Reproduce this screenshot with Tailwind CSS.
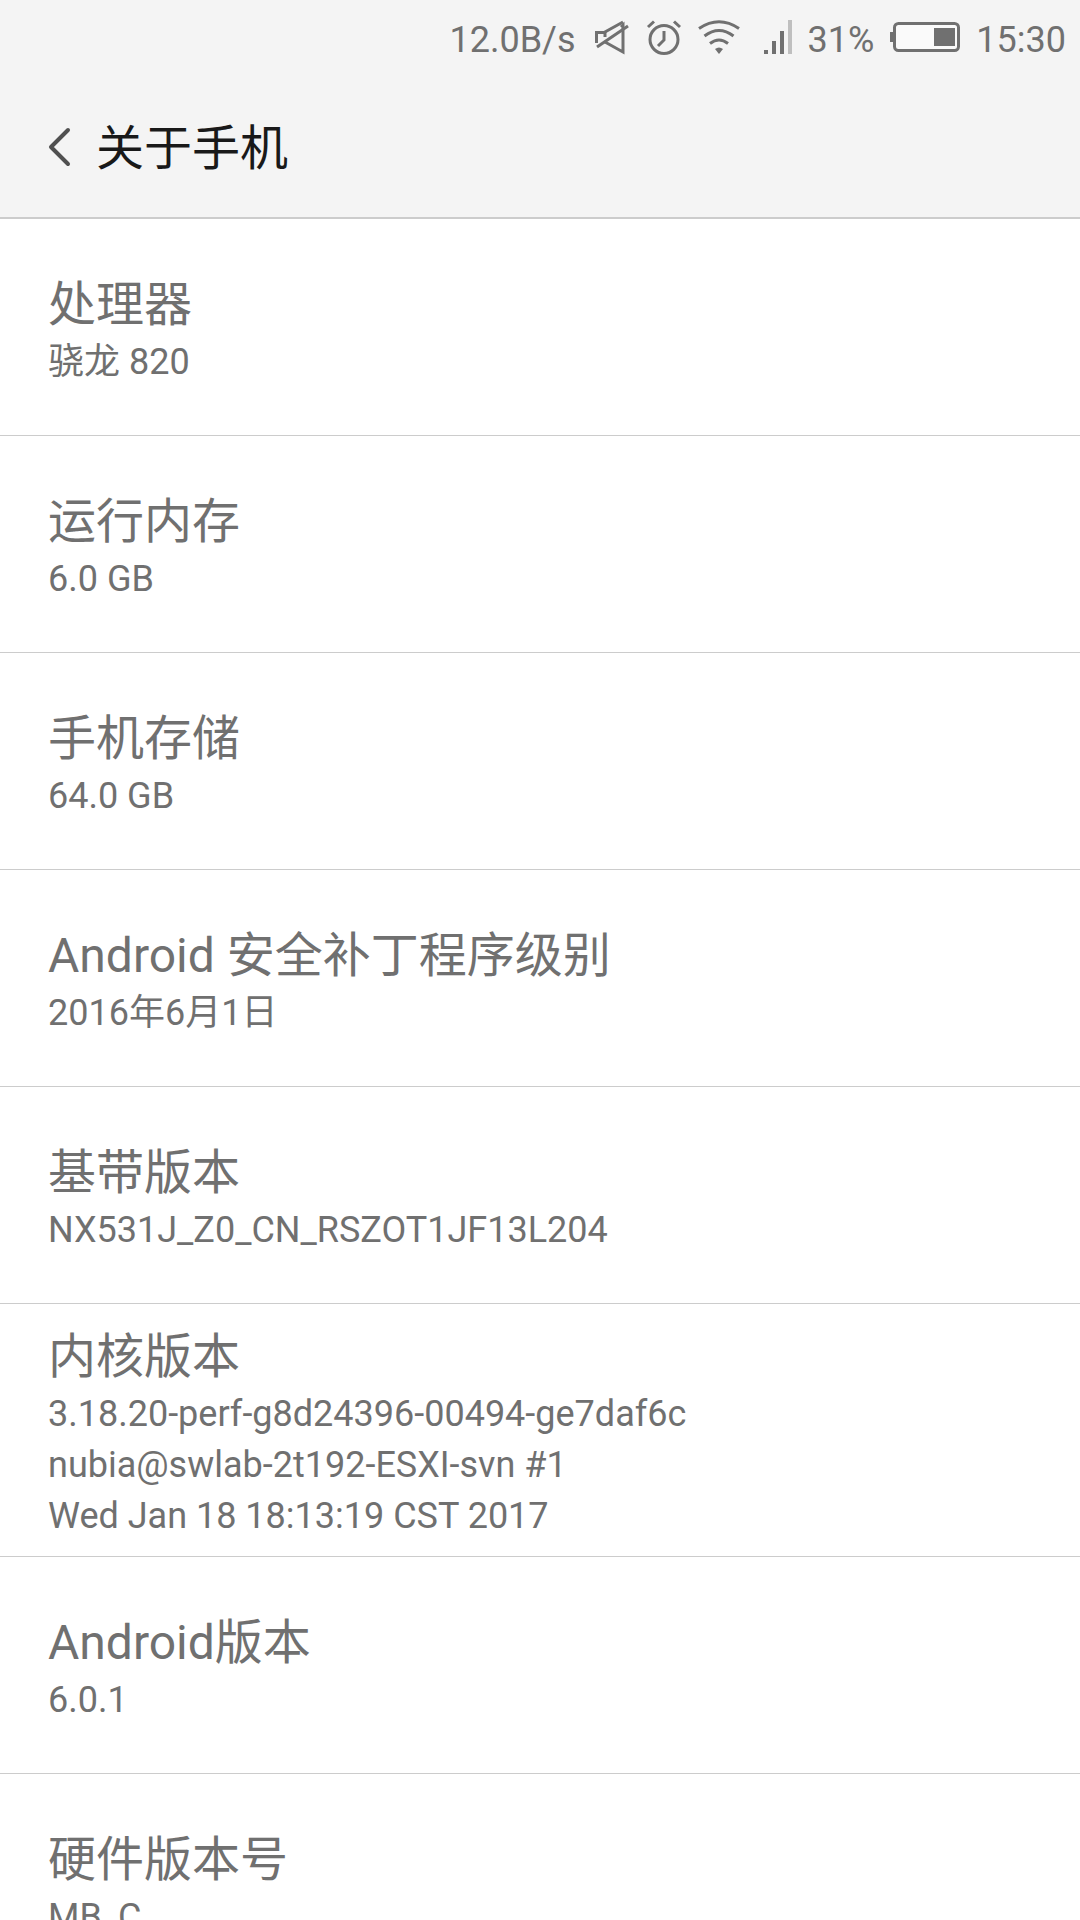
<!DOCTYPE html>
<html lang="zh-CN">
<head>
    <meta charset="UTF-8">
    <meta name="viewport" content="width=device-width, initial-scale=1.0">
    <title>关于手机</title>
    <script src="https://cdn.jsdelivr.net/npm/@tailwindcss/browser@4"></script>
</head>
<body class="h-screen overflow-hidden bg-white text-[#707070] font-[Roboto,'Noto_Sans_CJK_SC',sans-serif]">
    <header class="bg-[#f4f4f4] border-b-2 border-[#cccccc]">
        <!-- status bar -->
        <div class="flex items-center justify-end h-[74px] pr-[14px] text-4xl [&>span]:pt-[6px]">
            <span class="mr-[18px]">12.0B/s</span>
            <svg class="mr-4 w-9 h-9" viewBox="0 0 36 36" fill="none" stroke="currentColor" stroke-width="3">
                <path d="M2.5 24V13.5H10L29 3"/>
                <path d="M11 13V18"/>
                <path d="M27 8L29 6V33L11 23"/>
                <path d="M3 28L34 7"/>
            </svg>
            <svg class="mr-4 w-9 h-9" viewBox="0 0 36 36" fill="none" stroke="currentColor" stroke-width="3">
                <circle cx="18" cy="20.5" r="14"/>
                <path d="M18 12V21L12 27"/>
                <path d="M2 8L8 2.5M28 2.5L34 8"/>
            </svg>
            <svg class="mr-6 w-[42px] h-9" viewBox="0 0 42 36" fill="none" stroke="currentColor" stroke-width="3">
                <path d="M1 9.5Q21 -4 41 9.5M6.500 17Q21 6 35.500 17M12 24.5Q21 17.5 30 24.5"/>
                <path d="M17 30Q21 27 25 30L21 35Z" fill="currentColor" stroke="none"/>
            </svg>
            <svg class="mr-4 w-7 h-9" viewBox="0 0 28 36" fill="currentColor">
                <path d="M0 31h4v4H0zM8 22h4v13H8zM16 12h4v23h-4z"/>
                <path d="M24 1h4v34h-4z" fill="#bfbfbf"/>
            </svg>
            <span class="mr-4">31%</span>
            <svg class="mr-4 w-[70px] h-9" viewBox="0 0 70 36">
                <rect x="4.5" y="4.5" width="64" height="27" rx="4" fill="#fafafa" stroke="currentColor" stroke-width="3"/>
                <path d="M0 13h4v10H0zM44 9h21v18H44z" fill="currentColor"/>
            </svg>
            <span>15:30</span>
        </div>
        <div class="flex items-center h-[143px] pt-[2px] pl-12">
            <button type="button" aria-label="返回" class="mr-6 text-[#505050]">
                <svg class="w-6 h-10" viewBox="0 0 24 40" fill="none" stroke="currentColor" stroke-width="4" stroke-linecap="round" stroke-linejoin="round">
                    <path d="M20 3L3 20L20 37"/>
                </svg>
            </button>
            <h1 class="pt-1 text-5xl leading-[56px] text-[#191919]">关于手机</h1>
        </div>
    </header>

    <dl class="[&>div]:flex [&>div]:flex-col [&>div]:justify-center [&>div]:min-h-[217px] [&>div]:px-12 [&>div]:pt-[21px] [&>div]:pb-[14px] [&>div]:border-b [&>div]:border-[#cccccc] [&_dt]:text-5xl [&_dt]:leading-[64px] [&_dd]:text-4xl [&_dd]:leading-[51px]">
        <div>
            <dt>处理器</dt>
            <dd>骁龙 820</dd>
        </div>
        <div>
            <dt>运行内存</dt>
            <dd>6.0 GB</dd>
        </div>
        <div>
            <dt>手机存储</dt>
            <dd>64.0 GB</dd>
        </div>
        <div>
            <dt>Android 安全补丁程序级别</dt>
            <dd>2016年6月1日</dd>
        </div>
        <div>
            <dt>基带版本</dt>
            <dd>NX531J_Z0_CN_RSZOT1JF13L204</dd>
        </div>
        <div>
            <dt>内核版本</dt>
            <dd>3.18.20-perf-g8d24396-00494-ge7daf6c<br>nubia@swlab-2t192-ESXI-svn #1<br>Wed Jan 18 18:13:19 CST 2017</dd>
        </div>
        <div>
            <dt>Android版本</dt>
            <dd>6.0.1</dd>
        </div>
        <div>
            <dt>硬件版本号</dt>
            <dd>MB_C</dd>
        </div>
    </dl>
</body>
</html>
